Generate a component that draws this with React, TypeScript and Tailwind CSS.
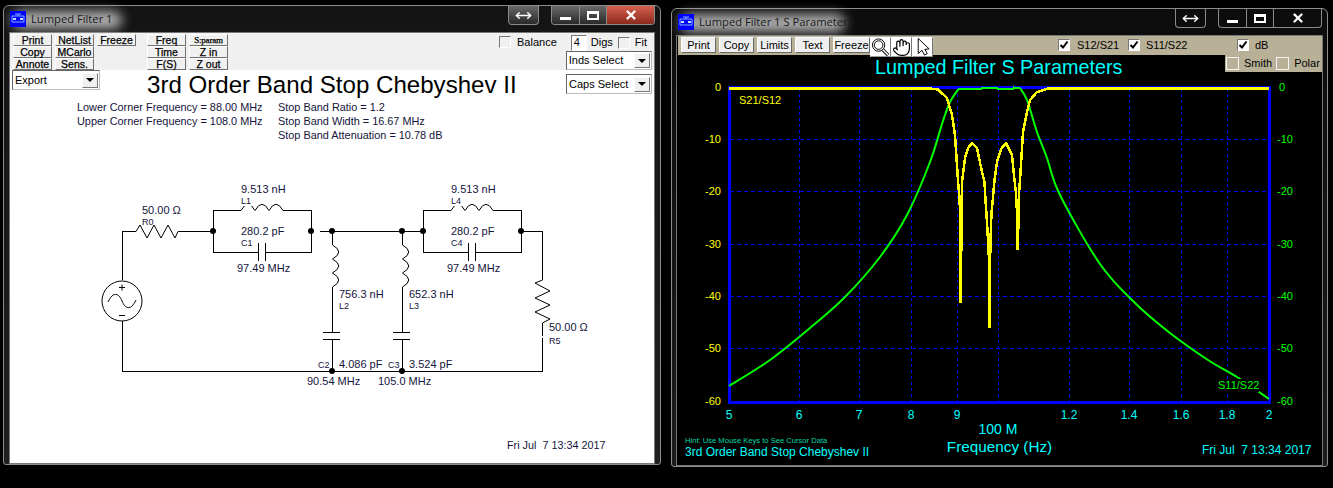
import { Hand, MoveHorizontal, X } from 'lucide-react';
import type { ReactNode } from 'react';

const INK = 'fill-[#14143c]';

const GREEN_LEFT = [
  [729, 386], [770, 360], [810, 328], [845, 297], [880, 257], [907, 215], [930, 162], [942, 124], [950, 102], [959, 88.5],
];
const GREEN_PASS = [
  [959, 88.5], [965, 89], [981, 89], [982, 87.5], [997, 87.5], [998, 89], [1013, 89], [1014, 87.5], [1020, 88],
];
const GREEN_RIGHT = [
  [1020, 88], [1027, 100], [1037, 132], [1047, 158], [1060, 195], [1100, 264], [1135, 303], [1170, 333], [1208, 360], [1237, 377], [1269, 399],
];

const YELLOW = [
  [729, 88.5], [930, 88.5], [938, 89.5], [947, 98], [952, 115], [955, 135], [958, 180], [959, 193], [960, 208],
  [960.5, 302], [961, 302], [961.5, 208], [962, 182], [965, 158], [968, 148], [972, 143], [977, 148], [982, 172],
  [984.5, 182], [985.3, 197], [986.5, 214], [988, 240], [989, 260], [989.3, 327], [990, 327], [990.3, 245], [991.5, 213],
  [993, 197], [994.5, 180], [997, 162], [1001, 149], [1006, 143], [1012, 155], [1014.5, 180], [1016, 193], [1017, 213],
  [1017.5, 249], [1018, 249], [1018.5, 213], [1019, 193], [1020, 180], [1023, 132], [1027, 112], [1030, 100], [1037, 92],
  [1048, 88.5], [1269, 88.5],
];

const GRID_X = [799, 859, 911, 957, 998, 1069, 1129, 1181, 1227];
const GRID_Y = [139, 191, 244, 296, 348];
const X_LABELS: [string, number][] = [
  ['5', 729], ['6', 799], ['7', 859], ['8', 911], ['9', 957], ['1.2', 1069], ['1.4', 1129], ['1.6', 1181], ['1.8', 1227], ['2', 1269],
];
const Y_LABELS: [string, number][] = [
  ['0', 87], ['-10', 139], ['-20', 191], ['-30', 244], ['-40', 296], ['-50', 348], ['-60', 401],
];

const pts = (list: number[][]) => list.map((p) => p.join(',')).join(' ');

// catmull-rom through the traced points, keeps the skirts from looking kinked
function smooth(p: number[][]) {
  let d = `M${p[0][0]} ${p[0][1]}`;
  for (let i = 0; i < p.length - 1; i++) {
    const a = p[i - 1] ?? p[i];
    const b = p[i];
    const c = p[i + 1];
    const e = p[i + 2] ?? c;
    d += ` C${b[0] + (c[0] - a[0]) / 6} ${b[1] + (c[1] - a[1]) / 6} ${c[0] - (e[0] - b[0]) / 6} ${c[1] - (e[1] - b[1]) / 6} ${c[0]} ${c[1]}`;
  }
  return d;
}

function Btn({ children, className = 'w-[39px] h-[12px]' }: { children?: ReactNode; className?: string }) {
  return (
    <div
      className={`flex items-center justify-center border border-t-white border-l-white border-r-[#707070] border-b-[#707070] bg-[#f0f0f0] text-[10.5px] leading-none text-black [-webkit-text-stroke:0.25px_black] ${className}`}
    >
      {children}
    </div>
  );
}

function Check({ checked, light, size = 'w-[12px] h-[12px]' }: { checked?: boolean; light?: boolean; size?: string }) {
  const edge = light ? 'border-[#f4f4f4]' : 'border-t-[#777] border-l-[#777] border-r-white border-b-white';
  return (
    <div className={`flex items-center justify-center border ${edge} ${checked ? 'bg-white' : ''} ${size}`}>
      {checked && (
        <svg width="10" height="10" viewBox="0 0 10 10">
          <path d="M1.5 5 L4 7.5 L8.5 1.5" fill="none" stroke="#000" strokeWidth="2" />
        </svg>
      )}
    </div>
  );
}

function Select({ label, className }: { label: string; className: string }) {
  return (
    <div className={`flex items-center justify-between border border-t-[#666] border-l-[#666] border-r-[#bbb] border-b-[#bbb] bg-white pl-[2px] pr-[1px] text-[11px] text-black ${className}`}>
      <span>{label}</span>
      <div className="flex h-[15px] w-[16px] items-center justify-center border border-t-white border-l-white border-r-[#777] border-b-[#777] bg-[#f0f0f0]">
        <div className="border-x-[4px] border-t-[4px] border-x-transparent border-t-black" />
      </div>
    </div>
  );
}

function WinIcon() {
  return (
    <svg width="16" height="16" viewBox="0 0 16 16" className="shrink-0">
      <rect width="16" height="16" fill="#0000ff" />
      <path d="M2 5 H14 M2 5 V11 M14 5 V11 M2 11 H14 M5 3 H11 M8 3 V5" stroke="#7fb0ff" fill="none" />
      <rect x="3" y="7" width="3" height="2" fill="#c8d8ff" />
      <rect x="10" y="7" width="3" height="2" fill="#c8d8ff" />
    </svg>
  );
}

function Caption({ active }: { active?: boolean }) {
  const face = active ? 'bg-gradient-to-b from-[#6a6a6a] to-[#2a2a2a]' : '';
  return (
    <div className="flex items-start">
      <div className={`flex h-[19px] w-[31px] items-center justify-center rounded-b-[4px] border border-t-0 border-[#8a8a8a] ${face}`}>
        <MoveHorizontal size={17} color="#fff" strokeWidth={2} />
      </div>
      <div className="ml-[12px] flex h-[19px] overflow-hidden rounded-b-[4px] border border-t-0 border-[#8a8a8a]">
        <div className={`flex w-[28px] items-center justify-center border-r border-[#8a8a8a] pt-[6px] ${face}`}>
          <div className="h-[3px] w-[11px] bg-white" />
        </div>
        <div className={`flex w-[27px] items-center justify-center border-r border-[#8a8a8a] ${face}`}>
          <div className="h-[9px] w-[12px] border-2 border-t-[3px] border-white" />
        </div>
        <div className={`flex w-[47px] items-center justify-center ${active ? 'bg-gradient-to-b from-[#d8604f] to-[#8a2a1c]' : ''}`}>
          <X size={14} color="#fff" strokeWidth={4} />
        </div>
      </div>
    </div>
  );
}

function TitleBar({ title, glow, active }: { title: string; glow: string; active?: boolean }) {
  return (
    <div className="relative flex h-[26px] shrink-0 items-start justify-between">
      <div className={`absolute left-[8px] top-[5px] h-[18px] rounded-full bg-[#d8d8d8] opacity-80 blur-[6px] ${glow}`} />
      <div className="relative ml-[6px] mt-[5px] flex items-center gap-[5px]">
        <WinIcon />
        <span className="font-['Open_Sans',sans-serif] text-[11.2px] leading-[16px] text-[#1a1a1a]">{title}</span>
      </div>
      <div className="relative mr-[5px]">
        <Caption active={active} />
      </div>
    </div>
  );
}

function Inductor({ d }: { d: string }) {
  return <path d={d} fill="none" stroke="#000" />;
}

function Label({ x, y, children, small }: { x: number; y: number; children: ReactNode; small?: boolean }) {
  return (
    <text x={x} y={y} className={`${INK} ${small ? 'text-[9px]' : 'text-[11px]'}`}>
      {children}
    </text>
  );
}

function Schematic() {
  const nodes = [[213, 231], [311, 231], [332, 231], [402, 231], [423, 231], [521, 231], [332, 371], [402, 371]];
  return (
    <svg viewBox="10 170 644 225" className="h-[225px] w-[644px] shrink-0">
      <g fill="none" stroke="#000" shapeRendering="crispEdges">
        <path d="M122.5 280 V231.5 H136 M178 231.5 H213 M320 231.5 H423 M521 231.5 H542.5 V280" />
        <path d="M122.5 321 V371.5 H542.5 V338 M542.5 336 V323" />
        <path d="M213.5 231 V210.5 H241 M283 210.5 H311.5 V252.5 H265.5 M258.5 252.5 H213.5 V231" />
        <path d="M423.5 231 V210.5 H451 M493 210.5 H521.5 V252.5 H475.5 M468.5 252.5 H423.5 V231" />
        <path d="M258.5 243 V261 M265.5 243 V261 M468.5 243 V261 M475.5 243 V261" />
        <path d="M332.5 231 V245 M332.5 287 V332.5 M323 332.5 H340 M323 339.5 H340 M332.5 339.5 V371" />
        <path d="M402.5 231 V245 M402.5 287 V332.5 M393 332.5 H410 M393 339.5 H410 M402.5 339.5 V371" />
      </g>
      <polyline points="136,231.5 140,225 147,238 154,225 161,238 168,225 175,238 178,231.5" fill="none" stroke="#000" />
      <polyline points="542.5,280 535,283 550,291 535,298 550,305 535,312 550,319 542.5,323" fill="none" stroke="#000" />
      <Inductor d="M241 210.5 Q248 198 255 210.5 Q262 198 269 210.5 Q276 198 283 210.5" />
      <Inductor d="M451 210.5 Q458 198 465 210.5 Q472 198 479 210.5 Q486 198 493 210.5" />
      <Inductor d="M332.5 245 Q345 252 332.5 259 Q345 266 332.5 273 Q345 280 332.5 287" />
      <Inductor d="M402.5 245 Q415 252 402.5 259 Q415 266 402.5 273 Q415 280 402.5 287" />
      <circle cx="122" cy="301" r="20" fill="none" stroke="#000" />
      <path d="M108 302 C113 291 119 293 122 301 C125 309 131 311 136 300" fill="none" stroke="#000" />
      <path d="M119 287.5 H125 M122 284.5 V290.5 M119 315.5 H125" stroke="#000" />
      {nodes.map(([x, y]) => (
        <circle key={`${x}-${y}`} cx={x} cy={y} r="3" fill="#000" />
      ))}
      <rect x="241" y="196" width="11" height="10" fill="#fff" />
      <rect x="451" y="196" width="11" height="10" fill="#fff" />
      <Label x={241} y={193}>9.513 nH</Label>
      <Label x={241} y={204} small>L1</Label>
      <Label x={142} y={214}>50.00 Ω</Label>
      <Label x={142} y={225} small>R0</Label>
      <Label x={241} y={235}>280.2 pF</Label>
      <Label x={241} y={246} small>C1</Label>
      <Label x={237} y={272}>97.49 MHz</Label>
      <Label x={451} y={193}>9.513 nH</Label>
      <Label x={451} y={204} small>L4</Label>
      <Label x={451} y={235}>280.2 pF</Label>
      <Label x={451} y={246} small>C4</Label>
      <Label x={447} y={272}>97.49 MHz</Label>
      <Label x={339} y={298}>756.3 nH</Label>
      <Label x={339} y={309} small>L2</Label>
      <Label x={409} y={298}>652.3 nH</Label>
      <Label x={409} y={309} small>L3</Label>
      <Label x={318} y={368} small>C2</Label>
      <Label x={339} y={368}>4.086 pF</Label>
      <Label x={388} y={368} small>C3</Label>
      <Label x={409} y={368}>3.524 pF</Label>
      <Label x={307} y={385}>90.54 MHz</Label>
      <Label x={378} y={385}>105.0 MHz</Label>
      <Label x={549} y={331}>50.00 Ω</Label>
      <Label x={549} y={344} small>R5</Label>
    </svg>
  );
}

function FilterWindow() {
  return (
    <div className="absolute left-[3px] top-[5px] flex h-[460px] w-[658px] flex-col rounded-t-[6px] rounded-b-[3px] border border-[#8c8c8c] bg-gradient-to-b from-[#141414] to-[#1f1f1f]">
      <TitleBar title="Lumped Filter 1" glow="w-[110px]" active />
      <div className="mx-[5px] flex flex-1 flex-col overflow-hidden border border-[#777] bg-white">
        <div className="flex h-[37px] shrink-0 items-start bg-[#f0f0f0] pl-[3px] pt-[1px]">
          <div className="flex flex-col">
            <Btn>Print</Btn>
            <Btn>Copy</Btn>
            <Btn>Annote</Btn>
          </div>
          <div className="ml-[3px] flex flex-col">
            <Btn>NetList</Btn>
            <Btn>MCarlo</Btn>
            <Btn>Sens.</Btn>
          </div>
          <Btn className="ml-[3px] h-[12px] w-[39px]">Freeze</Btn>
          <div className="ml-[11px] flex flex-col">
            <Btn>Freq</Btn>
            <Btn>Time</Btn>
            <Btn>F(S)</Btn>
          </div>
          <div className="ml-[3px] flex flex-col">
            <Btn className="h-[12px] w-[39px] border-[#555]"><span className="font-['Liberation_Serif',serif] text-[9px] tracking-[-0.2px]">S:param</span></Btn>
            <Btn>Z in</Btn>
            <Btn>Z out</Btn>
          </div>
          <div className="ml-[271px] flex items-center gap-[6px] text-[11px] text-black">
            <Check />
            <span>Balance</span>
          </div>
          <div className="ml-[9px] flex w-[86px] flex-col">
            <div className="flex h-[17px] items-center pl-[5px] text-[11px] text-black">
              <div className="flex h-[16px] w-[16px] items-center border border-t-[#777] border-l-[#777] border-r-white border-b-white bg-white pl-[2px]">4</div>
              <span className="ml-[4px] w-[21px]">Digs</span>
              <Check size="ml-[6px] w-[12px] h-[12px] shrink-0" />
              <span className="ml-[5px]">Fit</span>
            </div>
            <Select label="Inds Select" className="h-[19px] w-[86px]" />
          </div>
        </div>
        <div className="flex h-[30px] shrink-0 items-start pl-[2px]">
          <Select label="Export" className="h-[20px] w-[88px]" />
          <h1 className="ml-[47px] text-[24.1px] font-normal leading-[29px] text-black">3rd Order Band Stop Chebyshev II</h1>
          <Select label="Caps Select" className="ml-auto mr-[2px] mt-[4px] h-[20px] w-[86px]" />
        </div>
        <div className="ml-[67px] flex h-[70px] shrink-0 text-[10.9px] leading-[14px] text-[#14143c]">
          <div className="w-[201px]">
            <div>Lower Corner Frequency = 88.00 MHz</div>
            <div>Upper Corner Frequency = 108.0 MHz</div>
          </div>
          <div>
            <div>Stop Band Ratio = 1.2</div>
            <div>Stop Band Width = 16.67 MHz</div>
            <div>Stop Band Attenuation = 10.78 dB</div>
          </div>
        </div>
        <Schematic />
        <div className="ml-[497px] mt-[43px] text-[10.8px] leading-[14px] whitespace-pre text-[#14143c]">Fri Jul  7 13:34 2017</div>
      </div>
    </div>
  );
}

function Magnifier() {
  return (
    <svg width="20" height="20" viewBox="0 0 20 20">
      <circle cx="8" cy="8" r="6.5" fill="#fff" stroke="#000" />
      <circle cx="8" cy="8" r="4.5" fill="#fff" stroke="#000" />
      <path d="M12.5 13 L18 18.5" stroke="#000" strokeWidth="3.5" />
      <path d="M12.5 13 L18 18.5" stroke="#fff" strokeWidth="1.5" />
    </svg>
  );
}

function Arrow() {
  return (
    <svg width="20" height="20" viewBox="0 0 20 20">
      <polygon points="5.5,1 5.5,17 9.5,13.5 12,18.5 15,17 12.5,12.5 17,12" fill="#fff" stroke="#000" />
    </svg>
  );
}

function ToolBtn({ children }: { children: ReactNode }) {
  return (
    <div className="flex h-[20px] w-[21px] items-center justify-center border border-t-white border-l-white border-r-[#777] border-b-[#999] bg-white">
      {children}
    </div>
  );
}

function PlotBtn({ label, w = 'w-[35px]' }: { label: string; w?: string }) {
  return (
    <div className={`flex h-[16px] items-center justify-center border border-t-white border-l-white border-r-[#666] border-b-[#666] bg-[#f0f0f0] text-[11px] text-black ${w}`}>
      {label}
    </div>
  );
}

function Chart() {
  return (
    <svg viewBox="677 79 644 382" className="h-[382px] w-[644px] shrink-0">
      <g stroke="#0000ff" strokeWidth="1" shapeRendering="crispEdges">
        {GRID_X.map((x) => (
          <line key={x} x1={x + 0.5} x2={x + 0.5} y1={88} y2={401} strokeDasharray="3 3" />
        ))}
        {GRID_Y.map((y) => (
          <line key={y} x1={730} x2={1268} y1={y + 0.5} y2={y + 0.5} strokeDasharray="4 3" />
        ))}
      </g>
      <path d="M729.5 402 V87.5 H1269 V402 H728" fill="none" stroke="#0000ff" strokeWidth="3" shapeRendering="crispEdges" />
      <g fill="none" stroke="#00ff00" strokeWidth="2">
        <path d={smooth(GREEN_LEFT)} />
        <polyline points={pts(GREEN_PASS)} shapeRendering="crispEdges" />
        <path d={smooth(GREEN_RIGHT)} />
      </g>
      <polyline points={pts(YELLOW)} fill="none" stroke="#ffff00" strokeWidth="2.5" strokeLinejoin="round" shapeRendering="crispEdges" />
      {Y_LABELS.map(([t, y]) => (
        <text key={t} x={721} y={y + 4} textAnchor="end" className="fill-[#ffff00] text-[11px]">{t}</text>
      ))}
      {Y_LABELS.map(([t, y]) => (
        <text key={t} x={t === '0' ? 1279 : 1277} y={y + 4} className="fill-[#00ff00] text-[11px]">{t}</text>
      ))}
      {X_LABELS.map(([t, x]) => (
        <text key={t} x={x} y={419} textAnchor="middle" className="fill-[#00ffff] text-[12px]">{t}</text>
      ))}
      <text x={739} y={104} className="fill-[#ffff00] text-[11px]">S21/S12</text>
      <rect x="1216" y="379" width="43" height="13" fill="#000" />
      <text x={1218} y={389} className="fill-[#00ff00] text-[11px]">S11/S22</text>
      <text x={998} y={434} textAnchor="middle" className="fill-[#00ffff] text-[14px]">100 M</text>
      <text x={999.5} y={452} textAnchor="middle" className="fill-[#00ffff] text-[15.3px]">Frequency (Hz)</text>
      <text x={685} y={443} className="fill-[#00d8a8] text-[7.6px]">Hint: Use Mouse Keys to See Cursor Data</text>
      <text x={685} y={456} className="fill-[#00ffff] text-[12px]">3rd Order Band Stop Chebyshev II</text>
      <text x={1202} y={454} xmlSpace="preserve" className="fill-[#00ffff] text-[12px]">Fri Jul  7 13:34 2017</text>
    </svg>
  );
}

function ParamsWindow() {
  const tan = 'bg-[#b8b197]';
  return (
    <div className="absolute left-[671px] top-[8px] flex h-[459px] w-[657px] flex-col rounded-t-[6px] rounded-b-[3px] border border-[#8c8c8c] bg-gradient-to-b from-[#0c0c0c] to-[#1c1c1c]">
      <TitleBar title="Lumped Filter 1 S Parameters" glow="w-[165px]" />
      <div className="mx-[4px] flex flex-1 flex-col overflow-hidden border border-[#777] bg-black">
        <div className={`ml-[1px] flex h-[19px] shrink-0 items-start pl-[3px] pt-[1px] ${tan}`}>
          <div className="flex gap-[3px]">
            <PlotBtn label="Print" />
            <PlotBtn label="Copy" />
            <PlotBtn label="Limits" />
            <PlotBtn label="Text" />
            <PlotBtn label="Freeze" w="w-[37px]" />
          </div>
          <div className="relative z-10 flex">
            <ToolBtn><Magnifier /></ToolBtn>
            <ToolBtn><Hand size={19} color="#000" fill="#fff" strokeWidth={1.5} /></ToolBtn>
            <ToolBtn><Arrow /></ToolBtn>
          </div>
          <div className="ml-[125px] mt-[2px] flex items-center text-[11px] leading-[12px] text-black">
            <Check checked />
            <span className="ml-[7px] w-[51px]">S12/S21</span>
            <Check checked />
            <span className="ml-[6px] w-[91px]">S11/S22</span>
            <Check checked />
            <span className="ml-[6px]">dB</span>
          </div>
        </div>
        <div className="relative flex h-[24px] shrink-0 items-start">
          <div className="ml-[198px] text-[19.8px] leading-[24px] text-[#00ffff]">Lumped Filter S Parameters</div>
          <div className={`ml-auto flex h-[17px] w-[97px] items-center pl-[1px] text-[11px] text-black ${tan}`}>
            <Check light size="w-[13px] h-[13px]" />
            <span className="ml-[5px]">Smith</span>
            <Check light size="ml-[4px] w-[13px] h-[13px]" />
            <span className="ml-[5px]">Polar</span>
          </div>
        </div>
        <Chart />
      </div>
    </div>
  );
}

export default function App() {
  return (
    <div className="relative h-[488px] w-[1333px] overflow-hidden bg-black font-['Liberation_Sans',Arial,sans-serif]">
      <FilterWindow />
      <ParamsWindow />
    </div>
  );
}
